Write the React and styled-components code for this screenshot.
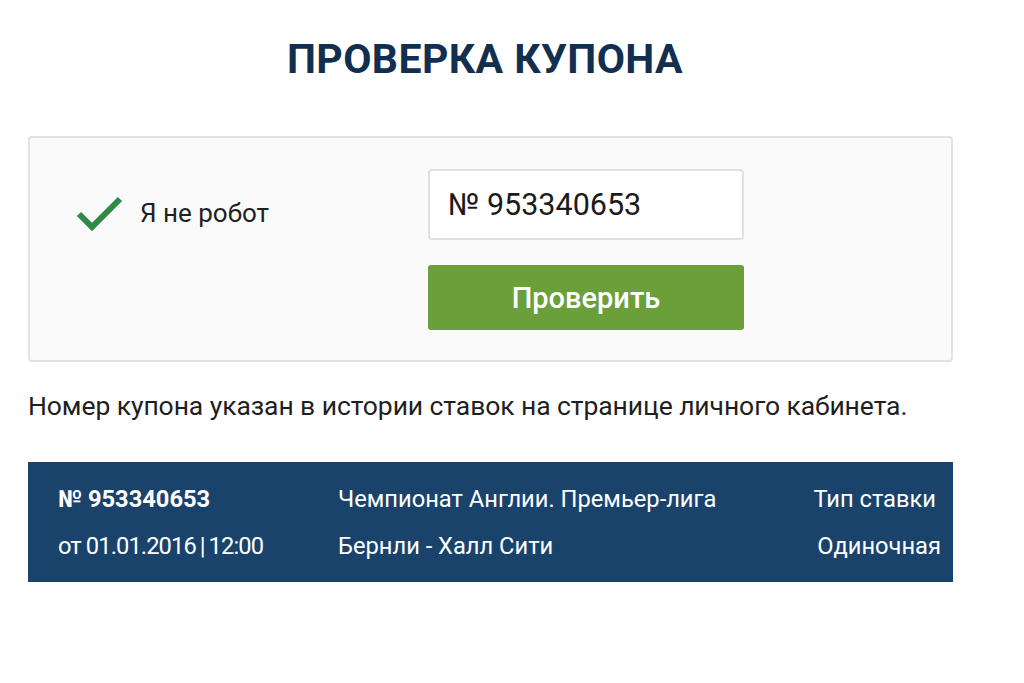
import React from "react";
import styled, { createGlobalStyle } from "styled-components";

const Global = createGlobalStyle`
  html, body { margin: 0; padding: 0; background: #fff; }
  body { font-family: Roboto, "Noto Sans", sans-serif; color: #1e1e1e; }
`;

const Page = styled.div`
  width: 925px;
  padding: 34px 0 0 28px;
  display: flex;
  flex-direction: column;
`;

const Title = styled.h1`
  margin: 0;
  padding-right: 11px;
  text-align: center;
  font-size: 41px;
  line-height: 50px;
  font-weight: 700;
  color: #132f50;
  letter-spacing: 0.4px;
`;

const Card = styled.div`
  margin-top: 52px;
  box-sizing: border-box;
  height: 226px;
  background: #fafafa;
  border: 2px solid #e2e2e2;
  border-radius: 4px;
  display: flex;
  padding: 31px 0 0 46px;
`;

const Robot = styled.div`
  width: 352px;
  display: flex;
  align-items: center;
  gap: 16px;
  height: 88px;
  font-size: 26px;
  color: #1f1f1f;
`;

const Form = styled.div`
  width: 316px;
  display: flex;
  flex-direction: column;
  gap: 25px;
`;

const Input = styled.div`
  box-sizing: border-box;
  height: 71px;
  background: #fff;
  border: 2px solid #e0e0e0;
  border-radius: 4px;
  display: flex;
  align-items: center;
  padding-left: 18px;
  font-size: 30.5px;
  color: #1a1a1a;
`;

const Button = styled.button`
  height: 65px;
  border: none;
  border-radius: 3px;
  background: #6a9f3a;
  color: #fff;
  font-family: inherit;
  font-size: 29px;
  font-weight: 500;
  padding: 0;
`;

const Hint = styled.p`
  margin: 28px 0 0;
  font-size: 26.5px;
  line-height: 32px;
  color: #1f1f1f;
  letter-spacing: -0.08px;
`;

const Panel = styled.div`
  margin-top: 40px;
  height: 120px;
  background: #1a436c;
  color: #fff;
  display: grid;
  grid-template-columns: 280px 1fr auto;
  align-content: center;
  row-gap: 19px;
  padding: 0 12px 0 30px;
  font-size: 23.7px;
  line-height: 28px;
`;

const Cell = styled.div`
  font-weight: ${(p) => (p.$bold ? 700 : 400)};
  text-align: ${(p) => (p.$right ? "right" : "left")};
  padding-right: ${(p) => p.$pr || 0}px;
  letter-spacing: ${(p) => (p.$tight ? "-0.9px" : "normal")};
`;

const Check = () => (
  <svg width="48" height="36" viewBox="0 0 48 36">
    <path d="M3 19 L16 32 L44 4" fill="none" stroke="#2e8b45" strokeWidth="6" />
  </svg>
);

export default function App() {
  return (
    <>
      <Global />
      <Page>
        <Title>ПРОВЕРКА КУПОНА</Title>
        <Card>
          <Robot>
            <Check />
            Я не робот
          </Robot>
          <Form>
            <Input>№ 953340653</Input>
            <Button>Проверить</Button>
          </Form>
        </Card>
        <Hint>Номер купона указан в истории ставок на странице личного кабинета.</Hint>
        <Panel>
          <Cell $bold>№ 953340653</Cell>
          <Cell>Чемпионат Англии. Премьер-лига</Cell>
          <Cell $right $pr={5}>Тип ставки</Cell>
          <Cell $tight>от 01.01.2016{"\u2009"}|{"\u2009"}12:00</Cell>
          <Cell>Бернли - Халл Сити</Cell>
          <Cell $right>Одиночная</Cell>
        </Panel>
      </Page>
    </>
  );
}
